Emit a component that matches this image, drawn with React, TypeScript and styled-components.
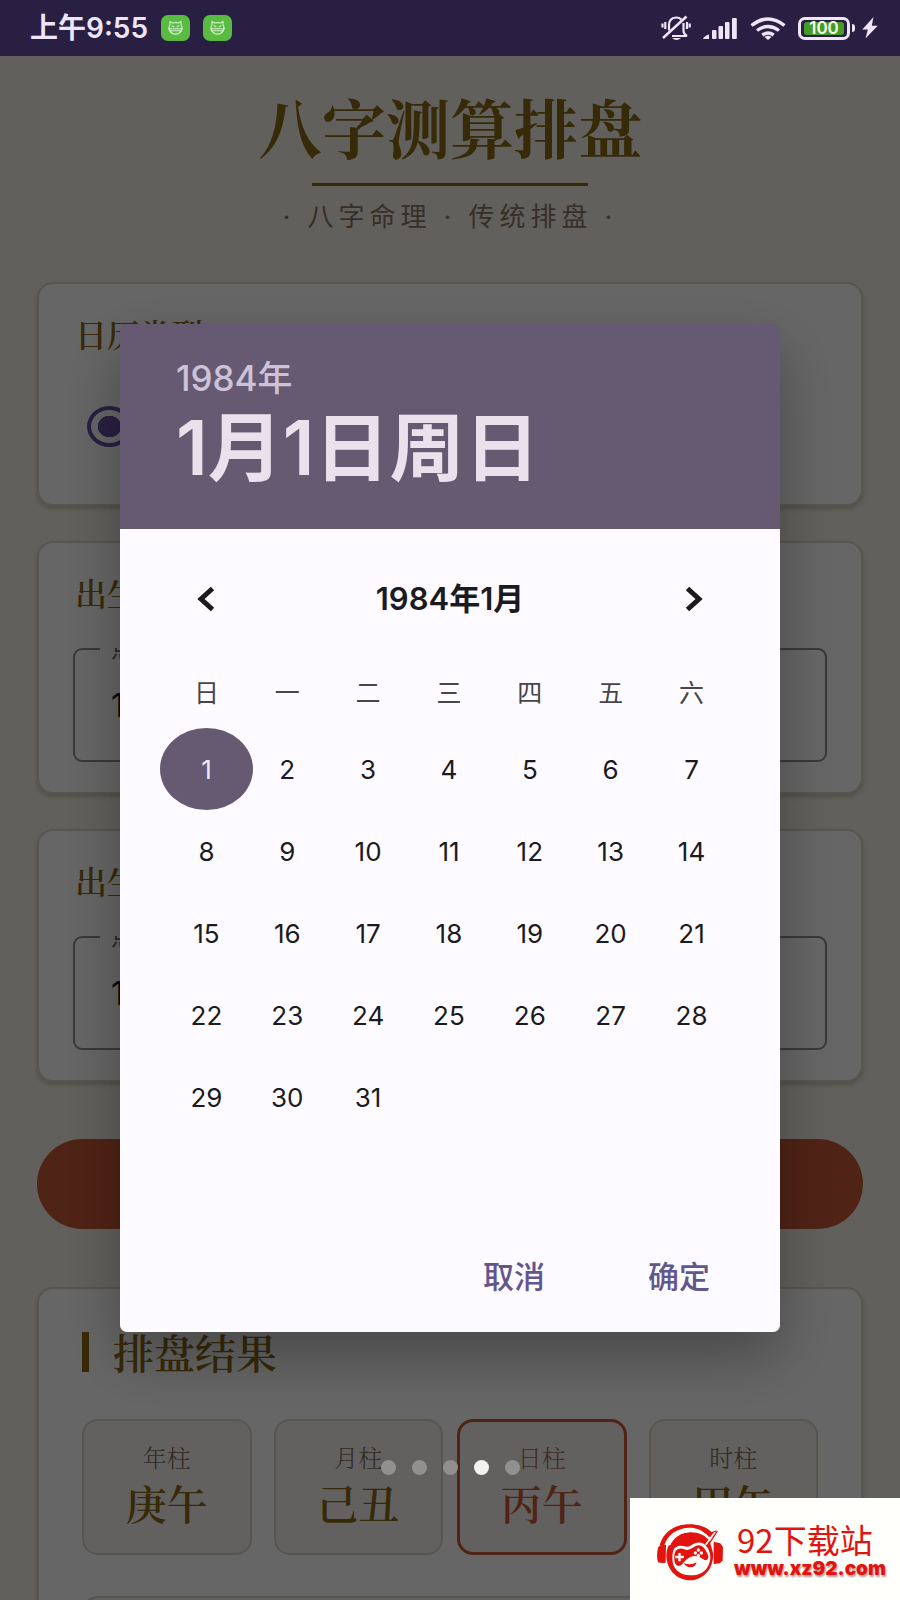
import React, { useState } from "react";
import styled, { createGlobalStyle, css } from "styled-components";

const sans = `Inter, "Noto Sans CJK SC", sans-serif`;
const serif = `"Noto Serif CJK SC", "Noto Sans CJK SC", serif`;

const color = {
  page: "#f5f0e6",
  card: "#ffffff",
  line: "#dcd4c6",
  gold: "#8b6914",
  muted: "#8a7762",
  accent: "#c65835",
  primary: "#6650a4",
  header: "#655a72",
  surface: "#fdfbff",
  ink: "#1b1a1e",
  brand: "#e3130f",
};

const GlobalStyle = createGlobalStyle`
  * { box-sizing: border-box; }
  body { margin: 0; overflow: hidden; background: ${color.page}; font-family: ${sans}; }
  h1, h2, h3, p { margin: 0; }
  button, input { font-family: inherit; }
`;

const Screen = styled.div`
  height: 100vh;
  overflow: hidden;
  background: ${color.page};
`;

const StatusBar = styled.header`
  display: flex;
  align-items: center;
  justify-content: space-between;
  height: 56px;
  padding: 0 22px 0 30px;
  background: #291f42;
  color: #eee6f8;
`;

const StatusGroup = styled.div<{ $gap: number }>`
  display: flex;
  align-items: center;
  gap: ${(p) => p.$gap}px;
`;

const Clock = styled.time`
  font-size: 28px;
  line-height: 32px;
  font-weight: 600;
`;

const Main = styled.main`
  display: flex;
  flex-direction: column;
  padding: 29px 37px 0;
`;

const Hero = styled.div`
  display: flex;
  flex-direction: column;
  align-items: center;
  margin-bottom: 47px;
`;

const Title = styled.h1`
  font-family: ${serif};
  font-size: 64px;
  line-height: 80px;
  font-weight: 700;
  color: ${color.gold};
`;

const Rule = styled.hr`
  width: 276px;
  height: 3px;
  margin: 18px 0 13px;
  border: 0;
  background: ${color.gold};
`;

const Subtitle = styled.p`
  font-size: 26px;
  line-height: 36px;
  letter-spacing: 5px;
  white-space: pre;
  color: ${color.muted};
`;

const Stack = styled.div`
  display: flex;
  flex-direction: column;
  gap: 35px;
`;

const Card = styled.section`
  padding: 30px 34px;
  border: 2px solid ${color.line};
  border-radius: 16px;
  background: ${color.card};
  box-shadow: 0 3px 4px rgba(90, 70, 40, 0.25);
`;

const CardTitle = styled.h2`
  margin-bottom: 38px;
  padding-left: 2px;
  font-family: ${serif};
  font-size: 32px;
  line-height: 38px;
  font-weight: 600;
  color: ${color.gold};
`;

const RadioRow = styled.div`
  display: flex;
  align-items: center;
  gap: 80px;
  min-height: 72px;
  margin: 0 14px 12px;
`;

const RadioLabel = styled.label`
  display: flex;
  align-items: center;
  gap: 20px;
  font-size: 28px;
`;

const Radio = styled.input`
  appearance: none;
  width: 45px;
  height: 41px;
  margin: 0;
  border: 4px solid ${color.primary};
  border-radius: 50%;
  &:checked {
    background: radial-gradient(ellipse 12px 11px, ${color.primary} 96%, transparent);
  }
`;

const Field = styled.fieldset`
  display: flex;
  flex-direction: column;
  height: 125px;
  margin: -12px 0 0;
  padding: 0 36px;
  border: 2px solid #8f8b92;
  border-radius: 9px;
`;

const FieldLabel = styled.legend`
  margin-left: -11px;
  padding: 0 11px;
  font-size: 24px;
  line-height: 24px;
  color: #66626a;
  clip-path: inset(11px 0 0);
`;

const FieldInput = styled.input`
  width: 100%;
  flex: 1;
  padding: 0 0 10px;
  border: 0;
  outline: 0;
  background: transparent;
  font-size: 32px;
  color: ${color.ink};
`;

const Submit = styled.button`
  height: 90px;
  margin: 57px 0 58px;
  border: 0;
  border-radius: 45px;
  background: ${color.accent};
  color: #fff;
  font-size: 32px;
`;

const ResultCard = styled(Card)`
  padding: 43px 43px;
`;

const ResultTitle = styled.h2`
  margin-bottom: 47px;
  padding-left: 24px;
  border-left: 7px solid ${color.gold};
  font-family: ${serif};
  font-size: 41px;
  line-height: 40px;
  font-weight: 600;
  color: ${color.gold};
`;

const Pillars = styled.div`
  display: flex;
  gap: 14px;
  margin-bottom: 41px;
`;

const PillarPair = styled.div`
  display: grid;
  flex: 1;
  grid-template-columns: 1fr 1fr;
  gap: 22px;
`;

const Pillar = styled.div<{ $active?: boolean }>`
  display: flex;
  flex-direction: column;
  align-items: center;
  gap: 2px;
  height: 136px;
  padding-top: 20px;
  border: 2px solid ${color.line};
  border-radius: 16px;
  background: #f6f3ed;
  color: ${color.gold};
  font-family: ${serif};
  ${(p) =>
    p.$active &&
    css`
      padding-top: 19px;
      border: 3px solid ${color.accent};
      color: ${color.accent};
    `}
`;

const PillarLabel = styled.span<{ $active?: boolean }>`
  font-size: 24px;
  line-height: 32px;
  font-weight: 300;
  color: ${(p) => (p.$active ? "#a86d55" : "#7d6c58")};
`;

const PillarName = styled.strong`
  font-size: 41px;
  line-height: 56px;
  font-weight: 600;
`;

const NextPanel = styled.div`
  height: 120px;
  border: 2px solid ${color.line};
  border-radius: 16px;
  background: #f6f3ed;
`;

const Scrim = styled.div`
  position: fixed;
  inset: 56px 0 0;
  display: flex;
  align-items: center;
  padding: 0 120px;
  background: rgba(0, 0, 0, 0.6);
`;

const Dialog = styled.div`
  flex: 1;
  border-radius: 7px;
  box-shadow: 0 24px 60px rgba(0, 0, 0, 0.3);
`;

const DialogHeader = styled.div`
  height: 205px;
  padding: 32px 56px 0;
  border-radius: 7px 7px 0 0;
  background: ${color.header};
`;

const DialogBody = styled.div`
  border-radius: 0 0 7px 7px;
  background: ${color.surface};
`;

const YearButton = styled.button`
  display: block;
  padding: 0;
  border: 0;
  background: none;
  font-size: 35px;
  line-height: 44px;
  font-weight: 500;
  color: #cdc3d8;
`;

const DateHeading = styled.h2`
  font-size: 75px;
  line-height: 96px;
  font-weight: 600;
  white-space: nowrap;
  color: #e9e2ec;
`;

const MonthBar = styled.div`
  display: flex;
  align-items: center;
  justify-content: space-between;
  padding: 40px 46px 34px;
`;

const MonthTitle = styled.h3`
  font-size: 31px;
  line-height: 60px;
  font-weight: 600;
  color: ${color.ink};
`;

const ArrowButton = styled.button`
  display: grid;
  place-items: center;
  width: 80px;
  height: 60px;
  padding: 0;
  border: 0;
  background: none;
  color: ${color.ink};
`;

const Calendar = styled.table`
  width: calc(100% - 94px);
  margin: 0 48px 0 46px;
  border-collapse: collapse;
  table-layout: fixed;
`;

const Weekday = styled.th`
  height: 65px;
  padding: 0 0 6px;
  font-size: 25px;
  line-height: 32px;
  font-weight: 400;
  color: #47454a;
`;

const DayCell = styled.td`
  height: 82px;
  padding: 0;
`;

const Day = styled.button<{ $selected: boolean }>`
  display: block;
  width: calc(100% + 12px);
  height: 82px;
  margin: 0 -6px;
  padding: 0;
  border: 0;
  border-radius: 50%;
  font-size: 26px;
  background: ${(p) => (p.$selected ? color.header : "transparent")};
  color: ${(p) => (p.$selected ? "#eee8f2" : color.ink)};
`;

const Actions = styled.div`
  display: flex;
  justify-content: flex-end;
  gap: 61px;
  padding: 110px 49px 32px;
`;

const Action = styled.button`
  width: 104px;
  height: 52px;
  padding: 0;
  border: 0;
  background: none;
  font-size: 31px;
  font-weight: 500;
  color: #62568c;
`;

const Dots = styled.nav`
  position: fixed;
  left: 0;
  right: 0;
  bottom: 125px;
  display: flex;
  justify-content: center;
  gap: 16px;
`;

const Dot = styled.button<{ $current: boolean }>`
  width: 15px;
  height: 15px;
  padding: 0;
  border: 0;
  border-radius: 50%;
  background: ${(p) => (p.$current ? "#f3f2f1" : "#92908e")};
`;

const SiteBadge = styled.a`
  position: fixed;
  right: 0;
  bottom: 0;
  display: flex;
  align-items: center;
  gap: 11px;
  width: 270px;
  height: 102px;
  padding: 6px 0 0 27px;
  background: #fffffb;
  color: ${color.brand};
  text-decoration: none;
`;

const SiteText = styled.span`
  display: flex;
  flex-direction: column;
`;

const SiteName = styled.span`
  padding-left: 3px;
  font-family: "Noto Sans CJK SC", sans-serif;
  font-size: 33px;
  line-height: 34px;
`;

const SiteUrl = styled.span`
  font-size: 19px;
  line-height: 26px;
  font-weight: 900;
  text-shadow: 1px 2px 2px rgba(60, 0, 0, 0.4);
`;

const CatIcon = () => (
  <svg width="29" height="26" viewBox="0 0 29 26" fill="none" aria-hidden="true">
    <rect width="29" height="26" rx="7" fill="#59bb42" />
    <g stroke="#d4f3cb" strokeWidth="1.1" strokeLinejoin="round" strokeLinecap="round">
      <path d="M9 9.500V6.400l2.400 1.600q3-.8 6.200 0L20 6.400v3.100q2 3.500 0 6.600-2 3-5.500 3T9 16.100Q7 13 9 9.500Z" />
      <path d="M7.500 13.700h14M8.500 15.800h12M11 10.800l2 1M18 10.800l-2 1" />
    </g>
  </svg>
);

const MutedBellIcon = () => (
  <svg width="30" height="26" viewBox="0 0 30 26" fill="none" stroke="currentColor" strokeWidth="2.200" aria-hidden="true">
    <path d="M8 15.500V10.500Q8 3 15 2.500q3-.2 5.500 2M22.500 8V16q.3 3.500 3.500 5H11M4.300 7v7M1.500 8.500v4M26 7v7M28.700 8.500v4" />
    <path d="M25.500 1.500 2 23" strokeWidth="2.500" />
    <path d="M11 23h9q-4.500 4-9 0Z" fill="currentColor" stroke="none" />
  </svg>
);

const SignalIcon = () => (
  <svg width="35" height="23" viewBox="0 0 35 23" fill="currentColor" aria-hidden="true">
    <path d="M0 22q1-3 6-4.500V22Z" />
    <rect x="9" y="13" width="4.500" height="9" rx="1" />
    <rect x="15.500" y="9" width="4.500" height="13" rx="1" />
    <rect x="22" y="5" width="4.500" height="17" rx="1" />
    <rect x="29" y="1" width="4.800" height="21" rx="1" />
  </svg>
);

const WifiIcon = () => (
  <svg width="36" height="23" viewBox="0 0 36 23" fill="none" stroke="currentColor" strokeWidth="3.400" aria-hidden="true">
    <path d="M1.500 8.500q16.500-13 33 0M7 13.500q11-8 22 0M12.300 18q5.700-4 11.400 0" />
    <path d="M14.500 20q3.500-2.500 7 0L18 23Z" fill="currentColor" stroke="none" />
  </svg>
);

const BatteryShell = styled.span`
  display: flex;
  align-items: center;
  gap: 2px;
  &::after {
    content: "";
    width: 3px;
    height: 8px;
    border-radius: 0 3px 3px 0;
    background: currentColor;
  }
`;

const BatteryLevel = styled.span`
  width: 52px;
  height: 23px;
  border: 3px solid currentColor;
  border-radius: 7px;
  padding: 2px 3px;
`;

const BatteryFill = styled.span`
  display: block;
  border-radius: 3px;
  background: #469a26;
  font-size: 17px;
  line-height: 13px;
  font-weight: 600;
  text-align: center;
  color: #f4ffe9;
`;

const BoltIcon = () => (
  <svg width="16" height="22" viewBox="0 0 16 22" fill="currentColor" aria-hidden="true">
    <path d="M11.500 0 .3 12.400h5.500L3.500 21.500 15.700 8.800H9.800Z" />
  </svg>
);

const Chevron = ({ next }: { next?: boolean }) => (
  <svg width="18" height="26" viewBox="0 0 18 26" fill="none" stroke="currentColor" strokeWidth="5" aria-hidden="true">
    <path d={next ? "M2.500 2.500 14 13 2.500 23.500" : "M15.500 2.500 4 13l11.500 10.500"} />
  </svg>
);

const SiteLogo = () => (
  <svg width="66" height="57" viewBox="0 0 198 169" aria-hidden="true">
    <g fill="#e3130f">
      <path d="M4 67q11-7 23-5l-1 53q-10 3-23-1Q-3 91 4 67Z" />
      <path d="M170 52l20 5 8 12-1 39-8 9-19 2Z" />
      <path d="M101 24c25 0 43 9 56 24l11 37c4 45-27 82-69 83-42-1-70-34-71-73 0-37 27-71 73-71Z" />
      <path d="M8 65C16 25 54 0 96 0c29 0 51 8 68 23l15-5-12 20-12-1C134 14 113 9 94 10 58 12 31 33 22 63Z" />
    </g>
    <path d="M174 24 146 61" stroke="#fffffb" strokeWidth="5" fill="none" />
    <path d="M181 20 157 57" stroke="#e3130f" strokeWidth="4" fill="none" />
    <path d="M36 62Q55 22 103 19q33-1 50 22" stroke="#fffffb" strokeWidth="7" fill="none" />
    <path
      d="M48 82c3-16 22-21 34-16 12 5 21-4 32-9 20-7 35 4 42 22 8 20 3 37-6 52-11 16-29 23-51 22-26-1-45-14-51-35-3-13-2-25 0-36Z"
      fill="#fffffb"
    />
    <path
      d="M54 84c3-11 19-14 28-9 13 6 23-4 34-10 19-9 31 10 37 28 4 13-6 18-14 12-11-9-27-14-39-7-10 5-17 13-24 21-9 10-21 6-23-7-2-9-2-19 1-28Z"
      fill="#e3130f"
    />
    <path d="M55 98h25M67.500 86v25" stroke="#fffffb" strokeWidth="7" />
    <g fill="#fffffb">
      <circle cx="124" cy="77" r="5" />
      <circle cx="124" cy="94" r="5" />
      <circle cx="115" cy="86" r="5" />
      <circle cx="133" cy="86" r="5" />
    </g>
    <path d="M80 116q19 9 39-2-4 15-19 15-14-1-20-13Z" fill="#e3130f" />
  </svg>
);

const weekdays = ["日", "一", "二", "三", "四", "五", "六"];
const weeks = [0, 1, 2, 3, 4].map((w) =>
  weekdays.map((_, d) => w * 7 + d + 1).map((n) => (n <= 31 ? n : null))
);

const fields = [
  { id: "birth-date", title: "出生日期", label: "点击选择日期", value: "1984-01-01" },
  { id: "birth-time", title: "出生时间", label: "点击选择时间", value: "12:00" },
];

const pillarPairs = [
  [
    { label: "年柱", name: "庚午" },
    { label: "月柱", name: "己丑" },
  ],
  [
    { label: "日柱", name: "丙午", active: true },
    { label: "时柱", name: "甲午" },
  ],
];

export default function App() {
  const [day, setDay] = useState(1);

  return (
    <Screen>
      <GlobalStyle />
      <StatusBar>
        <StatusGroup $gap={13}>
          <Clock>上午9:55</Clock>
          <CatIcon />
          <CatIcon />
        </StatusGroup>
        <StatusGroup $gap={12}>
          <MutedBellIcon />
          <SignalIcon />
          <WifiIcon />
          <StatusGroup $gap={7}>
            <BatteryShell>
              <BatteryLevel>
                <BatteryFill>100</BatteryFill>
              </BatteryLevel>
            </BatteryShell>
            <BoltIcon />
          </StatusGroup>
        </StatusGroup>
      </StatusBar>

      <Main>
        <Hero>
          <Title>八字测算排盘</Title>
          <Rule />
          <Subtitle>· 八字命理 · 传统排盘 ·</Subtitle>
        </Hero>

        <Stack>
          <Card>
            <CardTitle>日历类型</CardTitle>
            <RadioRow>
              <RadioLabel>
                <Radio type="radio" name="calendar" defaultChecked />
                公历
              </RadioLabel>
              <RadioLabel>
                <Radio type="radio" name="calendar" />
                农历
              </RadioLabel>
            </RadioRow>
          </Card>
          {fields.map((f) => (
            <Card key={f.id}>
              <CardTitle>{f.title}</CardTitle>
              <Field>
                <FieldLabel>
                  <label htmlFor={f.id}>{f.label}</label>
                </FieldLabel>
                <FieldInput id={f.id} defaultValue={f.value} readOnly />
              </Field>
            </Card>
          ))}
        </Stack>

        <Submit type="button">开始排盘</Submit>

        <ResultCard>
          <ResultTitle>排盘结果</ResultTitle>
          <Pillars>
            {pillarPairs.map((pair, i) => (
              <PillarPair key={i}>
                {pair.map((p) => (
                  <Pillar key={p.label} $active={"active" in p}>
                    <PillarLabel $active={"active" in p}>{p.label}</PillarLabel>
                    <PillarName>{p.name}</PillarName>
                  </Pillar>
                ))}
              </PillarPair>
            ))}
          </Pillars>
          <NextPanel />
        </ResultCard>
      </Main>

      <Scrim>
        <Dialog role="dialog" aria-modal="true" aria-labelledby="picked-date">
          <DialogHeader>
            <YearButton type="button">1984年</YearButton>
            <DateHeading id="picked-date">
              1月{day}日周{weekdays[(day - 1) % 7]}
            </DateHeading>
          </DialogHeader>
          <DialogBody>
            <MonthBar>
              <ArrowButton type="button" aria-label="上个月">
                <Chevron />
              </ArrowButton>
              <MonthTitle>1984年1月</MonthTitle>
              <ArrowButton type="button" aria-label="下个月">
                <Chevron next />
              </ArrowButton>
            </MonthBar>
            <Calendar>
              <thead>
                <tr>
                  {weekdays.map((w) => (
                    <Weekday key={w} scope="col">
                      {w}
                    </Weekday>
                  ))}
                </tr>
              </thead>
              <tbody>
                {weeks.map((week, i) => (
                  <tr key={i}>
                    {week.map((n, j) => (
                      <DayCell key={j}>
                        {n && (
                          <Day type="button" $selected={n === day} onClick={() => setDay(n)}>
                            {n}
                          </Day>
                        )}
                      </DayCell>
                    ))}
                  </tr>
                ))}
              </tbody>
            </Calendar>
            <Actions>
              <Action type="button">取消</Action>
              <Action type="button">确定</Action>
            </Actions>
          </DialogBody>
        </Dialog>
      </Scrim>

      <Dots aria-label="截图">
        {[1, 2, 3, 4, 5].map((n) => (
          <Dot key={n} type="button" $current={n === 4} aria-label={`第${n}张`} />
        ))}
      </Dots>

      <SiteBadge href="http://www.xz92.com">
        <SiteLogo />
        <SiteText>
          <SiteName>92下载站</SiteName>
          <SiteUrl>www.xz92.com</SiteUrl>
        </SiteText>
      </SiteBadge>
    </Screen>
  );
}
